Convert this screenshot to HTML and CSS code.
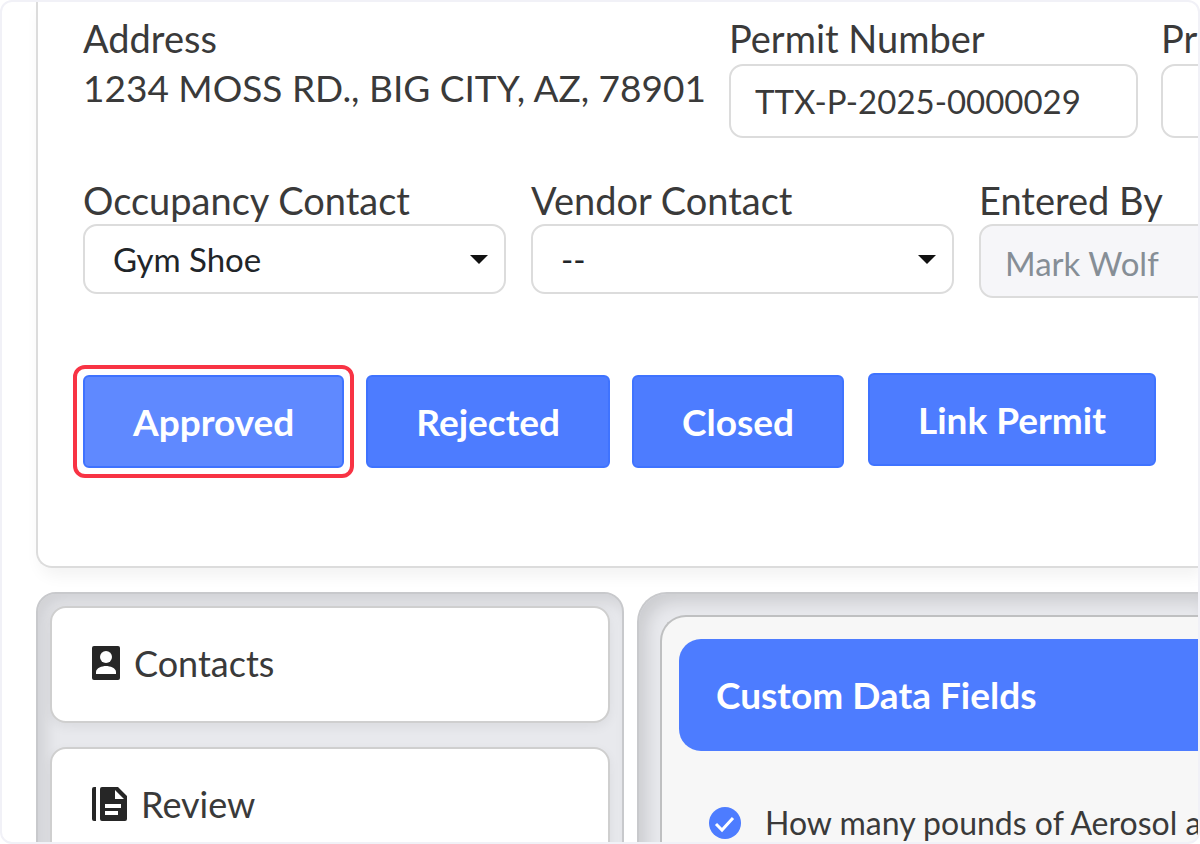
FILE: index.html
```html
<!DOCTYPE html>
<html lang="en">
<head>
<meta charset="utf-8">
<meta name="viewport" content="width=device-width, initial-scale=1">
<title>Permit Record</title>
<link rel="stylesheet" href="styles.css">
</head>
<body>
<div class="frame">
  <section class="record">
    <div class="field-row field-row-summary">
      <div class="field">
        <span class="field-label">Address</span>
        <span class="field-text">1234 MOSS RD., BIG CITY, AZ, 78901</span>
      </div>
      <div class="field field-input">
        <label class="field-label" for="permit-number">Permit Number</label>
        <input class="control" id="permit-number" type="text" value="TTX-P-2025-0000029">
      </div>
      <div class="field field-input">
        <label class="field-label" for="project">Pr</label>
        <input class="control" id="project" type="text">
      </div>
    </div>

    <div class="field-row">
      <div class="field field-select">
        <label class="field-label" for="occupancy">Occupancy Contact</label>
        <div class="select-wrap">
          <select class="select" id="occupancy"><option>Gym Shoe</option></select>
          <svg class="caret" viewBox="0 0 18 9" aria-hidden="true"><path d="M0 0h18L9 9z"/></svg>
        </div>
      </div>
      <div class="field field-select">
        <label class="field-label" for="vendor">Vendor Contact</label>
        <div class="select-wrap">
          <select class="select" id="vendor"><option>--</option></select>
          <svg class="caret" viewBox="0 0 18 9" aria-hidden="true"><path d="M0 0h18L9 9z"/></svg>
        </div>
      </div>
      <div class="field field-input">
        <label class="field-label" for="entered-by">Entered By</label>
        <input class="control" id="entered-by" type="text" value="Mark Wolf" disabled>
      </div>
    </div>

    <div class="actions">
      <div class="status-actions">
        <button class="button button-active" type="button">Approved</button>
        <button class="button" type="button">Rejected</button>
        <button class="button" type="button">Closed</button>
      </div>
      <button class="button" type="button">Link Permit</button>
    </div>
  </section>

  <div class="workspace">
    <nav class="sidebar">
      <a class="nav-card" href="#contacts">
        <svg class="icon-contact" viewBox="0 0 28 34" aria-hidden="true">
          <rect width="28" height="34" rx="2" fill="#262626"/>
          <circle cx="14" cy="11" r="6" fill="#fff"/>
          <path d="M4 28v-2c0-4 6-6 10-6s10 2 10 6v2z" fill="#fff"/>
        </svg>
        Contacts
      </a>
      <a class="nav-card" href="#review">
        <svg class="icon-review" viewBox="0 0 35 34" aria-hidden="true">
          <path d="M0 2q0-2 2-2h2v34H2q-2 0-2-2zM8 2q0-2 2-2h16l9 9v23q0 2-2 2H10q-2 0-2-2z" fill="#262626"/>
          <path d="M23 3v9h9zM13 17h16v4H13zM13 24h13v4H13z" fill="#fff"/>
        </svg>
        Review
      </a>
    </nav>
    <main class="content">
      <div class="content-card">
        <h2 class="content-title">Custom Data Fields</h2>
        <div class="question">
          <svg class="icon-check" viewBox="0 0 32 32" aria-hidden="true">
            <circle cx="16" cy="16" r="16" fill="#4d7cff"/>
            <path d="M7 17l6 6 11-12" fill="none" stroke="#fff" stroke-width="3"/>
          </svg>
          <span>How many pounds of Aerosol a</span>
        </div>
      </div>
    </main>
  </div>
</div>
</body>
</html>
```
FILE: styles.css
```css
* {
  box-sizing: border-box;
}

body {
  margin: 0;
  background: #fff;
  color: #3a3a3a;
  font-family: Lato, sans-serif;
  font-size: 37px;
  line-height: 44px;
}

input,
select,
button {
  margin: 0;
  font: inherit;
}

.frame {
  height: 100vh;
  overflow: hidden;
  padding-left: 34px;
  border: 2px solid #f1f1f7;
  border-radius: 12px;
}

.record {
  padding: 14px 0 98px 45px;
  border: solid #dcdcdc;
  border-width: 0 0 2px 2px;
  border-bottom-left-radius: 16px;
  box-shadow: 4px 8px 16px rgba(0, 0, 0, 0.05);
}

.field-row {
  display: flex;
  gap: 25px;
}

.field-row-summary {
  gap: 23px;
  margin-bottom: 40px;
}

.field {
  display: flex;
  flex: none;
  flex-direction: column;
  gap: 2px;
  white-space: nowrap;
}

.field-row-summary .field {
  gap: 4px;
}

.field-label {
  font-size: 38px;
}

.field-text {
  line-height: 48px;
}

.field-input {
  width: 409px;
}

.field-select {
  width: 423px;
}

.control,
.select {
  width: 100%;
  border: 2px solid #dcdcdc;
  border-radius: 14px;
  background: #fff;
  color: #3a3a3a;
  font-size: 33px;
}

.control {
  height: 74px;
  padding: 0 24px;
}

.control:disabled {
  padding-top: 3px;
  background: #f6f6f9;
  color: #868e96;
}

.select-wrap {
  position: relative;
}

.select {
  display: block;
  height: 70px;
  padding: 0 28px;
  appearance: none;
  color: #212529;
}

.caret {
  position: absolute;
  top: 31px;
  right: 18px;
  width: 18px;
  height: 9px;
  fill: #111;
  pointer-events: none;
}

.actions {
  display: flex;
  align-items: flex-start;
  gap: 24px;
  margin-top: 75px;
}

.status-actions {
  display: flex;
  gap: 22px;
  padding-top: 2px;
}

.button {
  position: relative;
  height: 93px;
  padding: 0 48px;
  border: 2px solid #3f73ff;
  border-radius: 6px;
  background: #4d7cff;
  color: #fff;
  font-weight: 700;
  white-space: nowrap;
}

.button-active {
  background: #5f89ff;
}

.button-active::after {
  content: "";
  position: absolute;
  inset: -12px;
  border: 4px solid #f83344;
  border-radius: 12px;
}

.workspace {
  display: flex;
  gap: 13px;
  margin-top: 24px;
}

.sidebar {
  display: flex;
  flex: none;
  flex-direction: column;
  gap: 24px;
  width: 588px;
  height: 400px;
  padding: 12px;
  border: 2px solid #c8c9cc;
  border-radius: 20px;
  background: #e8e9ed;
  box-shadow: inset 8px 8px 16px rgba(0, 0, 0, 0.1);
}

.nav-card {
  display: flex;
  flex: none;
  align-items: center;
  gap: 14px;
  height: 117px;
  padding: 0 40px 3px;
  border: 2px solid #cfcfcf;
  border-radius: 16px;
  background: #fff;
  box-shadow: 0 4px 12px rgba(0, 0, 0, 0.06);
  color: #3a3a3a;
  font-size: 36px;
  text-decoration: none;
}

.icon-contact {
  width: 28px;
  height: 34px;
}

.icon-review {
  width: 35px;
  height: 34px;
}

.content {
  flex: 1;
  min-width: 0;
  height: 400px;
  padding: 21px 0 0 21px;
  border: solid #c8c9cc;
  border-width: 2px 0 0 2px;
  border-top-left-radius: 30px;
  background: #e8e9ed;
  box-shadow: inset 8px 8px 16px rgba(0, 0, 0, 0.12);
}

.content-card {
  height: 100%;
  padding: 22px 0 0 17px;
  border: solid #bfc0c1;
  border-width: 2px 0 0 2px;
  border-top-left-radius: 26px;
  background: #f7f7f7;
}

.content-title {
  margin: 0;
  padding: 34px 37px;
  border-radius: 22px 0 0 22px;
  background: #4d7cff;
  color: #fff;
  font-size: 37px;
  font-weight: 700;
}

.question {
  display: flex;
  align-items: center;
  gap: 24px;
  padding: 50px 0 0 30px;
  font-size: 32px;
  white-space: nowrap;
}

.icon-check {
  flex: none;
  width: 32px;
  height: 32px;
}
```
